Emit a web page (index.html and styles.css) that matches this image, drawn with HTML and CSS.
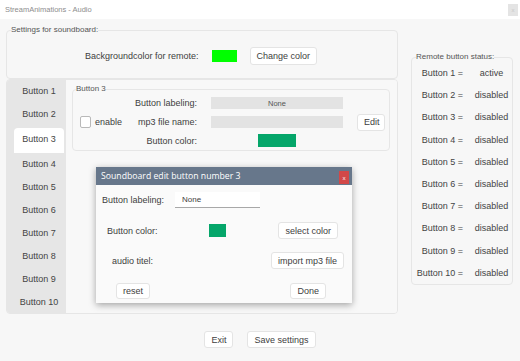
FILE: index.html
```html
<!DOCTYPE html>
<html>
<head>
<meta charset="utf-8">
<link rel="stylesheet" href="styles.css">
</head>
<body>
<div class="titlebar">
  <span class="app-title">StreamAnimations - Audio</span>
  <span class="win-close">x</span>
</div>
<div class="app">
  <div class="columns">
    <div class="left">
      <fieldset class="settings">
        <legend>Settings for soundboard:</legend>
        <div class="bg-row">
          <span>Backgroundcolor for remote:</span>
          <span class="swatch lime"></span>
          <button class="btn">Change color</button>
        </div>
      </fieldset>
      <div class="panel">
        <div class="tabs">
          <div class="tab">Button 1</div>
          <div class="tab">Button 2</div>
          <div class="tab active">Button 3</div>
          <div class="tab">Button 4</div>
          <div class="tab">Button 5</div>
          <div class="tab">Button 6</div>
          <div class="tab">Button 7</div>
          <div class="tab">Button 8</div>
          <div class="tab">Button 9</div>
          <div class="tab">Button 10</div>
        </div>
        <div class="tab-content">
          <fieldset class="btn-set">
            <legend>Button 3</legend>
            <div class="btn-grid">
              <span></span>
              <span class="lbl">Button labeling:</span>
              <span class="field">None</span>
              <span></span>

              <label class="check"><span class="box"></span>enable</label>
              <span class="lbl">mp3 file name:</span>
              <span class="field"></span>
              <button class="btn edit">Edit</button>

              <span></span>
              <span class="lbl">Button color:</span>
              <span class="swatch-cell"><span class="swatch green wide"></span></span>
              <span></span>
            </div>
          </fieldset>
        </div>
      </div>
    </div>
    <div class="right">
      <fieldset class="status">
        <legend>Remote button status:</legend>
        <div class="status-grid">
          <span>Button 1 =</span><span class="val">active</span>
          <span>Button 2 =</span><span class="val">disabled</span>
          <span>Button 3 =</span><span class="val">disabled</span>
          <span>Button 4 =</span><span class="val">disabled</span>
          <span>Button 5 =</span><span class="val">disabled</span>
          <span>Button 6 =</span><span class="val">disabled</span>
          <span>Button 7 =</span><span class="val">disabled</span>
          <span>Button 8 =</span><span class="val">disabled</span>
          <span>Button 9 =</span><span class="val">disabled</span>
          <span>Button 10 =</span><span class="val">disabled</span>
        </div>
      </fieldset>
    </div>
  </div>
  <div class="footer">
    <button class="btn">Exit</button>
    <button class="btn">Save settings</button>
  </div>
</div>

<div class="dialog">
  <div class="dlg-head">
    <span>Soundboard edit button number 3</span>
    <span class="dlg-close">x</span>
  </div>
  <div class="dlg-body">
    <div class="drow r1">
      <span class="dlbl">Button labeling:</span>
      <span class="dinput">None</span>
    </div>
    <div class="drow r2">
      <span class="dlbl">Button color:</span>
      <span class="swatch green small"></span>
      <button class="btn push">select color</button>
    </div>
    <div class="drow r3">
      <span class="dlbl">audio titel:</span>
      <button class="btn push">import mp3 file</button>
    </div>
    <div class="drow r4">
      <button class="btn">reset</button>
      <button class="btn push">Done</button>
    </div>
  </div>
</div>
</body>
</html>
```

FILE: styles.css
```css
* { box-sizing: border-box; }

html, body {
  margin: 0;
  padding: 0;
  width: 520px;
  height: 361px;
  overflow: hidden;
  background: #f7f7f7;
  font-family: "Liberation Sans", Arial, sans-serif;
  font-size: 9px;
  color: #3e3e3e;
}

.titlebar {
  height: 19px;
  background: #ffffff;
  display: flex;
  align-items: center;
  justify-content: space-between;
  padding: 0 2px 0 5px;
}
.app-title {
  font-size: 7.5px;
  color: #8e8e8e;
}
.win-close {
  width: 10px;
  height: 12px;
  background: #e4e4e4;
  color: #c8c8c8;
  font-size: 6px;
  display: flex;
  align-items: center;
  justify-content: center;
}

.app { padding: 0 6px; }

.columns {
  display: flex;
  align-items: flex-start;
  gap: 13px;
}
.left { width: 392px; margin-top: 6px; }
.right { width: 102px; margin-top: 33px; }

fieldset {
  margin: 0;
  min-width: 0;
  border: 1px solid #e6e6e6;
  border-radius: 4px;
  padding: 0;
}
legend {
  font-size: 8px;
  line-height: 10px;
  color: #555;
  padding: 0;
}

.settings legend { margin-left: 4px; }
.bg-row {
  display: flex;
  align-items: center;
  justify-content: center;
  gap: 13px;
  padding: 12px 2px 13px 0;
}

.swatch { display: inline-block; }
.lime { width: 25px; height: 12px; background: #00ff00; }
.green { background: #05a66a; }
.wide { width: 38px; height: 13px; }
.small { width: 17px; height: 13px; }

.btn {
  font-family: "Liberation Sans", Arial, sans-serif;
  font-size: 9px;
  color: #3e3e3e;
  background: #ffffff;
  border: 1px solid #e4e4e4;
  border-radius: 3px;
  height: 18px;
  padding: 0 6px;
  margin: 0;
}

.panel {
  display: flex;
  border: 1px solid #e6e6e6;
  border-radius: 4px;
  overflow: hidden;
  height: 235px;
}
.tabs {
  width: 59px;
  background: #e6e6e6;
  display: flex;
  flex-direction: column;
  padding: 0 2px 0 7px;
}
.tab {
  flex: 1;
  display: flex;
  align-items: center;
  justify-content: center;
  color: #444;
}
.tab.active {
  background: #ffffff;
  border-radius: 4px 4px 0 0;
  margin-top: 2px;
  padding-bottom: 2px;
}
.tab-content {
  flex: 1;
  background: #f8f8f8;
  padding: 4px 7px 0 6px;
}
.btn-set legend { margin-left: 3px; }
.btn-grid {
  display: grid;
  grid-template-columns: 42px 61px 132px 28px;
  grid-auto-rows: 18.7px;
  column-gap: 14px;
  align-items: center;
  padding-left: 7px;
}
.lbl { justify-self: end; white-space: nowrap; }
.field {
  height: 12px;
  background: #e3e3e3;
  font-size: 7.5px;
  color: #555;
  display: flex;
  align-items: center;
  justify-content: center;
}
.check {
  display: flex;
  align-items: center;
  gap: 4px;
  white-space: nowrap;
  font-size: 9px;
}
.box {
  width: 12px;
  height: 12px;
  background: #fff;
  border: 1px solid #b9b9b9;
  border-radius: 2px;
}
.edit { height: 17px; }
.swatch-cell { display: flex; justify-content: center; }

.status legend { margin-left: 4px; }
.status-grid {
  display: grid;
  grid-template-columns: 50px 45px;
  grid-auto-rows: 22.2px;
  align-items: center;
  padding-left: 1px;
  color: #444;
}
.status-grid span { justify-self: end; white-space: nowrap; }
.status-grid .val { justify-self: center; margin-left: 12px; }

.footer {
  display: flex;
  justify-content: center;
  gap: 14px;
  padding-top: 17px;
}
.footer .btn { height: 17px; }

.dialog {
  position: absolute;
  left: 96px;
  top: 167px;
  width: 256px;
  height: 136px;
  background: #fafafa;
  box-shadow: 0 2px 7px rgba(0, 0, 0, 0.35);
}
.dlg-head {
  height: 18px;
  background: #67778b;
  color: #ffffff;
  font-family: "Open Sans", "Liberation Sans", sans-serif;
  font-size: 8.7px;
  display: flex;
  align-items: center;
  justify-content: space-between;
  padding: 0 3px 0 5px;
}
.dlg-close {
  width: 10px;
  height: 13px;
  background: #d24848;
  font-size: 6px;
  display: flex;
  align-items: center;
  justify-content: center;
  margin-top: 3px;
}
.dlg-body {
  display: flex;
  flex-direction: column;
  padding-top: 7px;
}
.drow { display: flex; align-items: center; }
.drow .btn { height: 17px; }
.push { margin-left: auto; }
.r1 { padding-left: 6px; height: 16px; }
.r1 .dlbl { width: 73px; }
.dinput {
  width: 85px;
  height: 16px;
  background: #ffffff;
  border-bottom: 1px solid #a8a8a8;
  font-size: 8px;
  padding-left: 7px;
  display: flex;
  align-items: center;
}
.r2 { padding: 0 14px 0 11px; margin-top: 14px; }
.r2 .dlbl { width: 102px; }
.r3 { padding: 0 8px 0 16px; margin-top: 13px; }
.r4 { padding: 0 26px 0 20px; margin-top: 14px; }
.r4 .btn { height: 16px; }
```
